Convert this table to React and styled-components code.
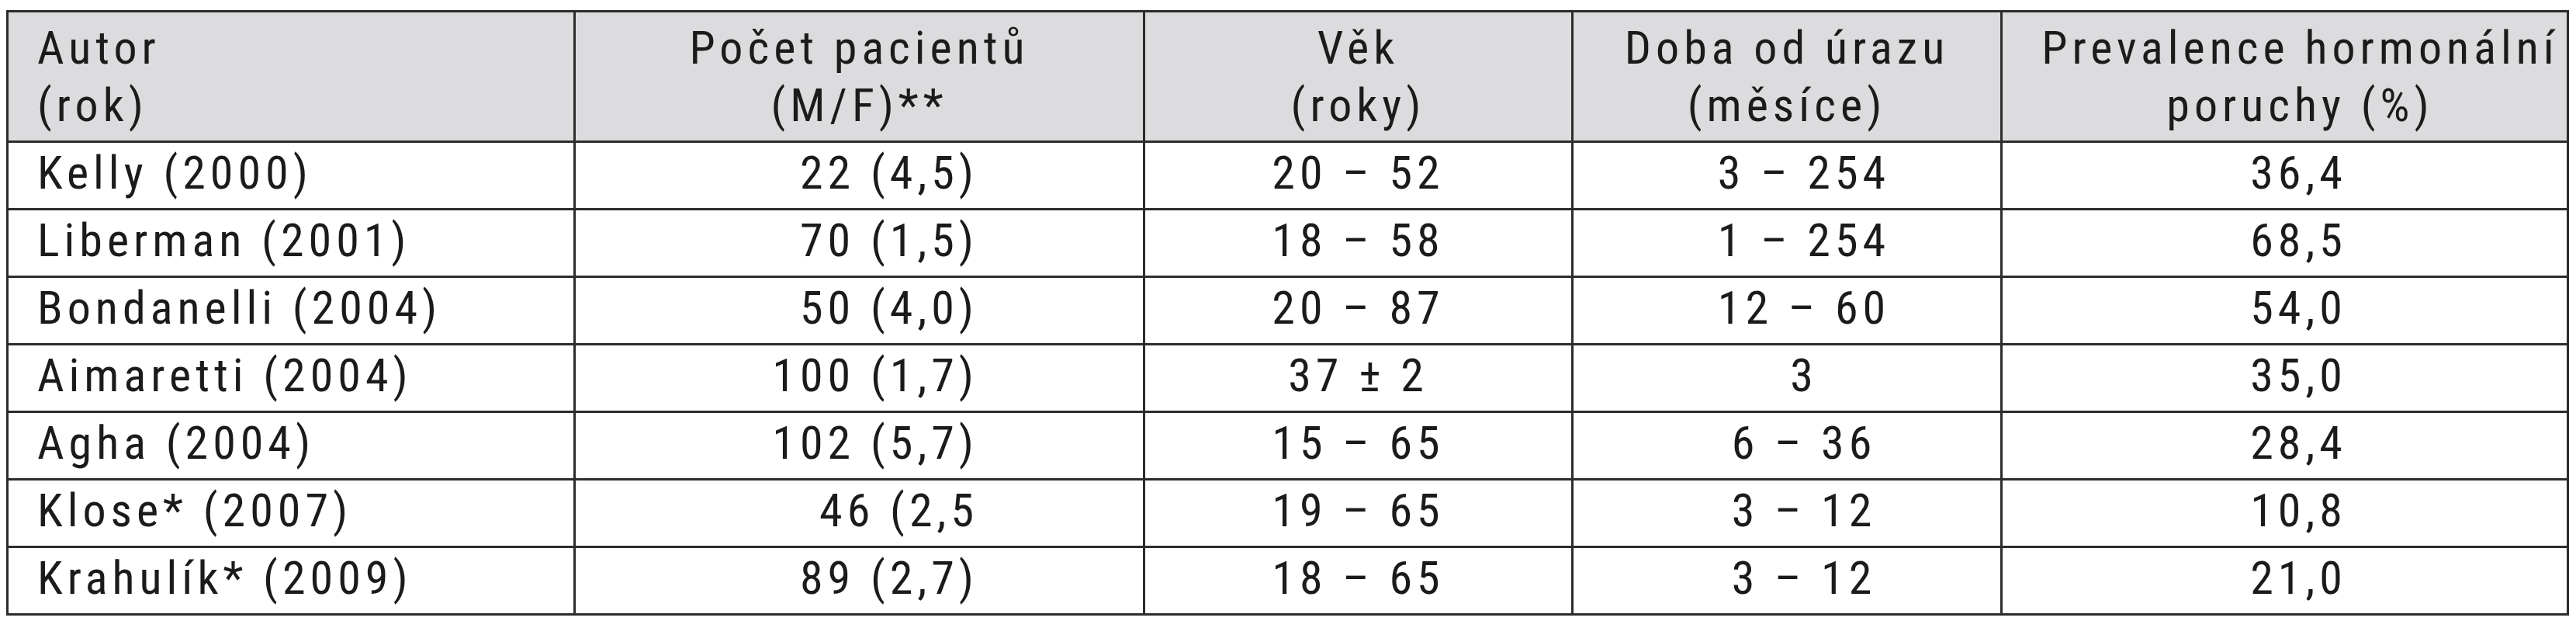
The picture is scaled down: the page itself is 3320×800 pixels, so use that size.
import React from "react";
import styled, { createGlobalStyle } from "styled-components";

const Global = createGlobalStyle`
  html, body { margin: 0; padding: 0; background: #ffffff; }
  body { padding: 13px 0 0 8px; }
`;

const Table = styled.div`
  width: 3303px;
  box-sizing: border-box;
  border: 3px solid #2c2c2c;
  color: #1b1b1b;
  font-family: "Roboto Condensed", "Roboto", "Liberation Sans", Arial, sans-serif;
  font-stretch: 75%;
  font-size: 60px;
  letter-spacing: 6px;
`;

const Row = styled.div`
  display: grid;
  grid-template-columns: 728px 734px 552px 553px 1fr;
  height: ${(p) => (p.$head ? "165px" : "84px")};
  background: ${(p) => (p.$head ? "#dcdcde" : "#ffffff")};
  & + & {
    border-top: 3px solid #2c2c2c;
  }
`;

const Cell = styled.div`
  display: flex;
  flex-direction: column;
  justify-content: center;
  align-items: ${(p) => (p.$align === "left" ? "flex-start" : p.$align === "right" ? "flex-end" : "center")};
  text-align: ${(p) => p.$align || "center"};
  padding-bottom: ${(p) => (p.$head ? "0" : "8px")};
  padding-left: ${(p) => (p.$align === "left" ? "37px" : `${p.$shift || 0}px`)};
  padding-right: ${(p) => (p.$align === "right" ? "212px" : "0")};
  line-height: ${(p) => (p.$head ? "74px" : "1.15")};
  white-space: nowrap;
  & + & {
    border-left: 3px solid #2c2c2c;
  }
`;

const head = [
  { lines: ["Autor", "(rok)"], align: "left" },
  { lines: ["Počet pacientů", "(M/F)**"] },
  { lines: ["Věk", "(roky)"] },
  { lines: ["Doba od úrazu", "(měsíce)"] },
  { lines: ["Prevalence hormonální", "poruchy (%)"], shift: 40 },
];

const rows = [
  ["Kelly (2000)", "22 (4,5)", "20 – 52", "3 – 254", "36,4"],
  ["Liberman (2001)", "70 (1,5)", "18 – 58", "1 – 254", "68,5"],
  ["Bondanelli (2004)", "50 (4,0)", "20 – 87", "12 – 60", "54,0"],
  ["Aimaretti (2004)", "100 (1,7)", "37 ± 2", "3", "35,0"],
  ["Agha (2004)", "102 (5,7)", "15 – 65", "6 – 36", "28,4"],
  ["Klose* (2007)", "46 (2,5", "19 – 65", "3 – 12", "10,8"],
  ["Krahulík* (2009)", "89 (2,7)", "18 – 65", "3 – 12", "21,0"],
];

const cols = [
  { align: "left" },
  { align: "right" },
  { align: "center" },
  { align: "center", shift: 44 },
  { align: "center", shift: 36 },
];

export default function App() {
  return (
    <>
      <Global />
      <Table>
        <Row $head>
          {head.map((h, i) => (
            <Cell key={i} $head $align={h.align} $shift={h.shift}>
              {h.lines.map((l, j) => (
                <span key={j}>{l}</span>
              ))}
            </Cell>
          ))}
        </Row>
        {rows.map((r, i) => (
          <Row key={i}>
            {r.map((c, j) => (
              <Cell key={j} $align={cols[j].align} $shift={cols[j].shift}>
                {c}
              </Cell>
            ))}
          </Row>
        ))}
      </Table>
    </>
  );
}
